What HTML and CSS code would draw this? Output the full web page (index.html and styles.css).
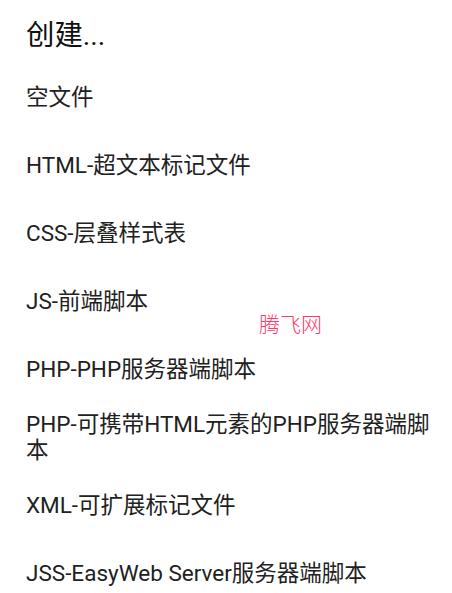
FILE: index.html
```html
<!DOCTYPE html>
<html lang="zh">
<head>
<meta charset="utf-8">
<link rel="stylesheet" href="styles.css">
</head>
<body>
<div class="dialog">
  <h1 class="title">创建...</h1>
  <ul class="list">
    <li class="item">空文件</li>
    <li class="item">HTML-超文本标记文件</li>
    <li class="item">CSS-层叠样式表</li>
    <li class="item">JS-前端脚本</li>
    <li class="item">PHP-PHP服务器端脚本</li>
    <li class="item">PHP-可携带HTML元素的PHP服务器端脚本</li>
    <li class="item">XML-可扩展标记文件</li>
    <li class="item">JSS-EasyWeb Server服务器端脚本</li>
  </ul>
  <div class="watermark">腾飞网</div>
</div>
</body>
</html>
```
FILE: styles.css
```css
html, body {
  margin: 0;
  padding: 0;
  background: #ffffff;
}
body {
  font-family: Roboto, "Noto Sans CJK SC", sans-serif;
  color: #212121;
}
.dialog {
  position: relative;
  width: 452px;
  height: 593px;
  overflow: hidden;
}
.title {
  margin: 0;
  padding: 20px 26px 11px 26px;
  font-size: 28.4px;
  line-height: 32px;
  font-weight: 400;
  color: #111111;
}
.list {
  list-style: none;
  margin: 0;
  padding: 0;
}
.item {
  display: flex;
  align-items: center;
  min-height: 52px;
  padding: 8px 20px 8px 26px;
  font-size: 22.5px;
  line-height: 26px;
}
.watermark {
  position: absolute;
  left: 259px;
  top: 310px;
  font-family: "Noto Sans CJK SC", sans-serif;
  font-weight: 300;
  font-size: 21px;
  line-height: 26px;
  color: #ff3a6a;
}
```
